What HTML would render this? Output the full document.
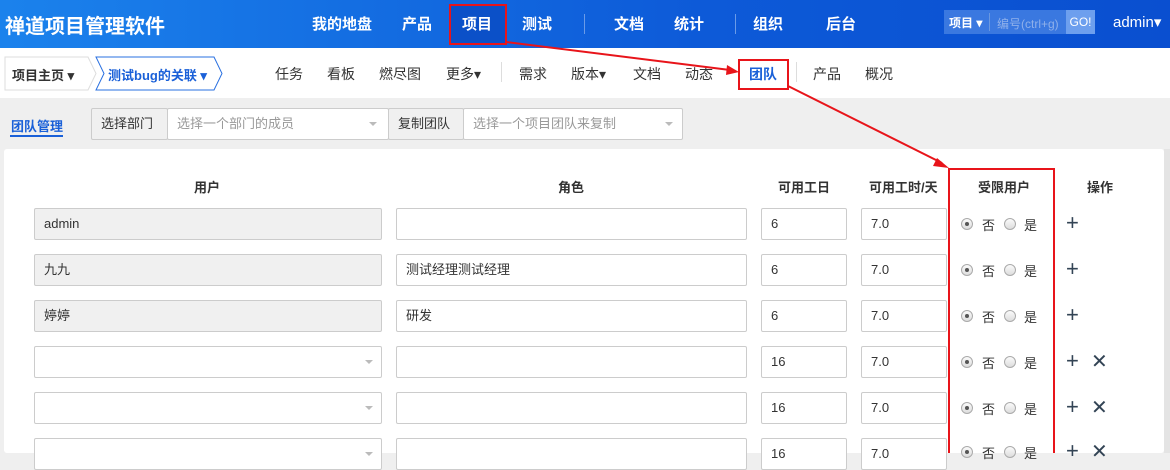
<!DOCTYPE html>
<html><head><meta charset="utf-8"><style>
*{box-sizing:border-box;margin:0;padding:0}
body{width:1170px;height:453px;overflow:hidden;background:#efefef;font-family:"Liberation Sans","Noto Sans CJK SC",sans-serif;font-size:13px;color:#333;position:relative}
.a{position:absolute;white-space:nowrap}
#hd{left:0;top:0;width:1170px;height:48px;background:linear-gradient(90deg,#1b82ec,#0d5ad8 60%,#0a4fd0)}
.nv{color:#fff;font-size:15px;font-weight:bold;top:13px}
.sn{font-size:14px;color:#333;top:64px}
.inp{position:absolute;height:32px;border:1px solid #ccc;border-radius:2px;background:#fff;padding:0 9px;line-height:30px;font-size:13px}
.gr{background:#f0f0f0}
.th{font-weight:bold;top:177px;font-size:13px}
.rd{position:absolute;width:12px;height:12px;border-radius:50%;border:1px solid #aaa;background:linear-gradient(#fafafa,#ddd)}
.rd.on::after{content:"";position:absolute;left:3px;top:3px;width:4px;height:4px;border-radius:50%;background:#555}
.car{position:absolute;width:0;height:0;border-left:4px solid transparent;border-right:4px solid transparent;border-top:4px solid #bbb}
</style></head><body>
<div id="hd" class="a"></div>
<div class="a" style="left:5px;top:10px;color:#fff;font-size:20px;font-weight:bold">禅道项目管理软件</div>
<div class="a" style="left:449px;top:4px;width:57px;height:40px;background:#0b50c8"></div>
<div class="a nv" style="left:312px">我的地盘</div>
<div class="a nv" style="left:402px">产品</div>
<div class="a nv" style="left:462px">项目</div>
<div class="a nv" style="left:522px">测试</div>
<div class="a" style="left:584px;top:14px;width:1px;height:20px;background:#6a9be8"></div>
<div class="a nv" style="left:614px">文档</div>
<div class="a nv" style="left:674px">统计</div>
<div class="a" style="left:735px;top:14px;width:1px;height:20px;background:#6a9be8"></div>
<div class="a nv" style="left:753px">组织</div>
<div class="a nv" style="left:826px">后台</div>
<div class="a" style="left:944px;top:10px;width:151px;height:24px;background:#3a78e0"></div>
<div class="a" style="left:949px;top:14px;color:#fff;font-size:12px;font-weight:bold">项目 ▾</div>
<div class="a" style="left:989px;top:13px;width:1px;height:18px;background:#6a98e0"></div>
<div class="a" style="left:997px;top:15px;color:#8fb0ea;font-size:12px">编号(ctrl+g)</div>
<div class="a" style="left:1066px;top:10px;width:29px;height:24px;background:#6d9fee;color:#fff;font-size:12px;line-height:24px;text-align:center">GO!</div>
<div class="a" style="left:1113px;top:13px;color:#fff;font-size:15px">admin▾</div>
<div class="a" style="left:0;top:48px;width:1170px;height:50px;background:#fff"></div>
<svg class="a" style="left:4px;top:56px" width="222" height="35"><path d="M1 1H84L92 17.5L84 34H1Z" fill="#fff" stroke="#ddd"/><path d="M92 1H210L218 17.5L210 34H92L100 17.5Z" fill="#fff" stroke="#2a70e0"/></svg>
<div class="a" style="left:12px;top:65px;font-size:13px;font-weight:bold">项目主页 ▾</div>
<div class="a" style="left:108px;top:65px;font-size:13px;font-weight:bold;color:#1a60d8">测试bug的关联 ▾</div>
<div class="a sn" style="left:275px">任务</div>
<div class="a sn" style="left:327px">看板</div>
<div class="a sn" style="left:379px">燃尽图</div>
<div class="a sn" style="left:446px">更多▾</div>
<div class="a" style="left:501px;top:62px;width:1px;height:20px;background:#ddd"></div>
<div class="a sn" style="left:519px">需求</div>
<div class="a sn" style="left:571px">版本▾</div>
<div class="a sn" style="left:633px">文档</div>
<div class="a sn" style="left:685px">动态</div>
<div class="a sn" style="left:749px;color:#1a60d8;font-weight:bold">团队</div>
<div class="a" style="left:796px;top:62px;width:1px;height:20px;background:#ddd"></div>
<div class="a sn" style="left:813px">产品</div>
<div class="a sn" style="left:865px">概况</div>
<div class="a" style="left:11px;top:116px;font-size:13px;font-weight:bold;color:#1a60d8">团队管理</div>
<div class="a" style="left:10px;top:135px;width:53px;height:2px;background:#1a60d8"></div>
<div class="inp gr" style="left:91px;top:108px;width:77px;height:32px">选择部门</div>
<div class="inp" style="left:167px;top:108px;width:222px;height:32px;color:#999">选择一个部门的成员</div>
<div class="car" style="left:369px;top:122px"></div>
<div class="inp gr" style="left:388px;top:108px;width:76px;height:32px">复制团队</div>
<div class="inp" style="left:463px;top:108px;width:220px;height:32px;color:#999">选择一个项目团队来复制</div>
<div class="car" style="left:665px;top:122px"></div>
<div class="a" style="left:4px;top:149px;width:1160px;height:304px;background:#fff;border-radius:3px"></div>
<div class="a" style="left:1164px;top:149px;width:6px;height:304px;background:#e4e4e4"></div>
<div class="a th" style="left:194px">用户</div>
<div class="a th" style="left:558px">角色</div>
<div class="a th" style="left:778px">可用工日</div>
<div class="a th" style="left:869px">可用工时/天</div>
<div class="a th" style="left:978px">受限用户</div>
<div class="a th" style="left:1087px">操作</div>
<!-- rows -->
<div class="inp gr" style="left:34px;top:208px;width:348px">admin</div>
<div class="inp" style="left:396px;top:208px;width:351px"></div>
<div class="inp gr" style="left:34px;top:254px;width:348px">九九</div>
<div class="inp" style="left:396px;top:254px;width:351px">测试经理测试经理</div>
<div class="inp gr" style="left:34px;top:300px;width:348px">婷婷</div>
<div class="inp" style="left:396px;top:300px;width:351px">研发</div>
<div class="inp" style="left:34px;top:346px;width:348px"></div><div class="car" style="left:365px;top:360px"></div>
<div class="inp" style="left:396px;top:346px;width:351px"></div>
<div class="inp" style="left:34px;top:392px;width:348px"></div><div class="car" style="left:365px;top:406px"></div>
<div class="inp" style="left:396px;top:392px;width:351px"></div>
<div class="inp" style="left:34px;top:438px;width:348px"></div><div class="car" style="left:365px;top:452px"></div>
<div class="inp" style="left:396px;top:438px;width:351px"></div>
<div class="inp" style="left:761px;top:208px;width:86px">6</div><div class="inp" style="left:861px;top:208px;width:86px">7.0</div>
<div class="inp" style="left:761px;top:254px;width:86px">6</div><div class="inp" style="left:861px;top:254px;width:86px">7.0</div>
<div class="inp" style="left:761px;top:300px;width:86px">6</div><div class="inp" style="left:861px;top:300px;width:86px">7.0</div>
<div class="inp" style="left:761px;top:346px;width:86px">16</div><div class="inp" style="left:861px;top:346px;width:86px">7.0</div>
<div class="inp" style="left:761px;top:392px;width:86px">16</div><div class="inp" style="left:861px;top:392px;width:86px">7.0</div>
<div class="inp" style="left:761px;top:438px;width:86px">16</div><div class="inp" style="left:861px;top:438px;width:86px">7.0</div>
<!-- radios -->
<div class="rd on" style="left:961px;top:218px"></div><div class="a" style="left:982px;top:215px">否</div><div class="rd" style="left:1004px;top:218px"></div><div class="a" style="left:1024px;top:215px">是</div><div class="a" style="left:1066px;top:210px;font-size:22px;color:#345">+</div>
<div class="rd on" style="left:961px;top:264px"></div><div class="a" style="left:982px;top:261px">否</div><div class="rd" style="left:1004px;top:264px"></div><div class="a" style="left:1024px;top:261px">是</div><div class="a" style="left:1066px;top:256px;font-size:22px;color:#345">+</div>
<div class="rd on" style="left:961px;top:310px"></div><div class="a" style="left:982px;top:307px">否</div><div class="rd" style="left:1004px;top:310px"></div><div class="a" style="left:1024px;top:307px">是</div><div class="a" style="left:1066px;top:302px;font-size:22px;color:#345">+</div>
<div class="rd on" style="left:961px;top:356px"></div><div class="a" style="left:982px;top:353px">否</div><div class="rd" style="left:1004px;top:356px"></div><div class="a" style="left:1024px;top:353px">是</div><div class="a" style="left:1066px;top:348px;font-size:22px;color:#345">+</div><div class="a" style="left:1091px;top:349px;font-size:20px;color:#345">✕</div>
<div class="rd on" style="left:961px;top:402px"></div><div class="a" style="left:982px;top:399px">否</div><div class="rd" style="left:1004px;top:402px"></div><div class="a" style="left:1024px;top:399px">是</div><div class="a" style="left:1066px;top:394px;font-size:22px;color:#345">+</div><div class="a" style="left:1091px;top:395px;font-size:20px;color:#345">✕</div>
<div class="rd on" style="left:961px;top:446px"></div><div class="a" style="left:982px;top:443px">否</div><div class="rd" style="left:1004px;top:446px"></div><div class="a" style="left:1024px;top:443px">是</div><div class="a" style="left:1066px;top:438px;font-size:22px;color:#345">+</div><div class="a" style="left:1091px;top:439px;font-size:20px;color:#345">✕</div>
<!-- annotations -->
<svg class="a" style="left:0;top:0" width="1170" height="453">
<rect x="450" y="5" width="56" height="39" fill="none" stroke="#e8141a" stroke-width="2"/>
<rect x="739" y="60" width="49" height="29" fill="none" stroke="#e8141a" stroke-width="2"/>
<rect x="949" y="169" width="105" height="290" fill="none" stroke="#e8141a" stroke-width="2"/>
<line x1="506" y1="42" x2="730" y2="70" stroke="#e8141a" stroke-width="2"/>
<path d="M739 72L727 65L726 75Z" fill="#e8141a"/>
<line x1="788" y1="86" x2="942" y2="163" stroke="#e8141a" stroke-width="2"/>
<path d="M949 168L937 158L933 166Z" fill="#e8141a"/>
</svg>
</body></html>
